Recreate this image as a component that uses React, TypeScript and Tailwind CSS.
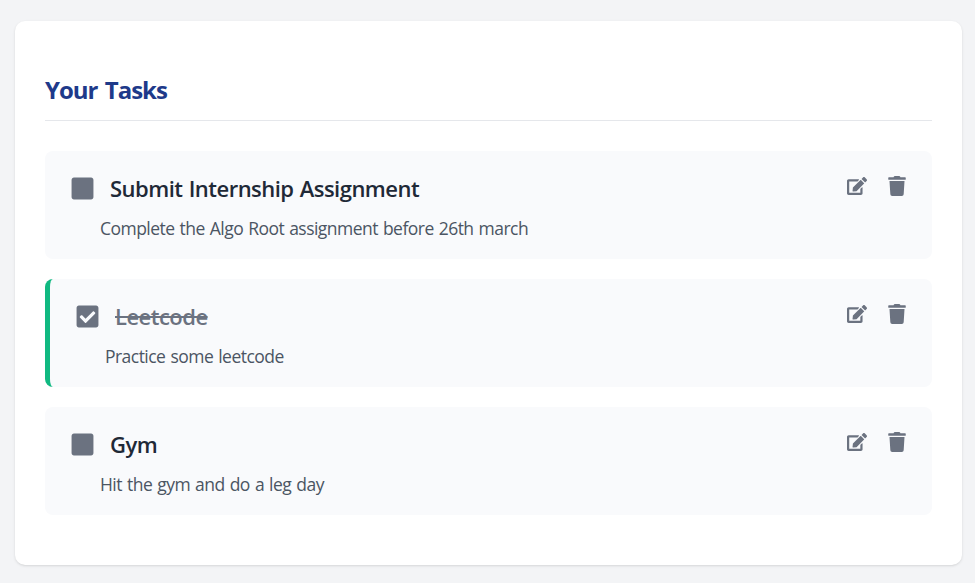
import React from 'react';
import { FaTrash, FaSquare, FaCheckSquare, FaEdit } from 'react-icons/fa';

type Task = { title: string; note: string; done: boolean };

const tasks: Task[] = [
  { title: 'Submit Internship Assignment', note: 'Complete the Algo Root assignment before 26th march', done: false },
  { title: 'Leetcode', note: 'Practice some leetcode', done: true },
  { title: 'Gym', note: 'Hit the gym and do a leg day', done: false },
];

function TaskCard({ task }: { task: Task }) {
  return (
    <li className={`flex h-[108px] justify-between rounded-lg bg-[#f9fafc] px-[25px] ${task.done ? 'border-l-[5px] border-[#10b981]' : ''}`}>
      <div className="pt-5">
        <div className="flex h-[34px] items-center gap-[15px]">
          <button aria-label="Toggle task" className="text-[#6b7280]">
            {task.done ? <FaCheckSquare size={25} /> : <FaSquare size={25} />}
          </button>
          <h3 className={`text-[22px] leading-[34px] font-semibold tracking-[-0.52px] whitespace-nowrap [word-spacing:1px] ${task.done ? 'text-[#6b7280] line-through' : 'text-[#1f2937]'}`}>{task.title}</h3>
        </div>
        <p className="mt-[9px] pl-[30px] text-[17.5px] leading-[29px] tracking-[-0.53px] whitespace-nowrap text-[#4b5563] [word-spacing:1px]">{task.note}</p>
      </div>
      <div className="flex gap-5 pt-[25px] text-[#6b7280]">
        <FaEdit size={20} />
        <FaTrash size={20} />
      </div>
    </li>
  );
}

export default function App() {
  return (
    <div className="h-[583px] bg-[#f3f4f6] pt-[21px] pr-[13px] pl-[15px] font-['Open_Sans','Noto_Sans',sans-serif]">
      <main className="h-[544px] rounded-[10px] bg-white px-[30px] pt-[50px] shadow">
        <h2 className="h-[50px] border-b border-[#e5e7eb] text-[24px] leading-[38px] font-bold tracking-[-1px] text-[#1e3a8a] [word-spacing:2px]">Your Tasks</h2>
        <ul className="mt-[30px] flex flex-col gap-5">
          {tasks.map((t) => <TaskCard key={t.title} task={t} />)}
        </ul>
      </main>
    </div>
  );
}
